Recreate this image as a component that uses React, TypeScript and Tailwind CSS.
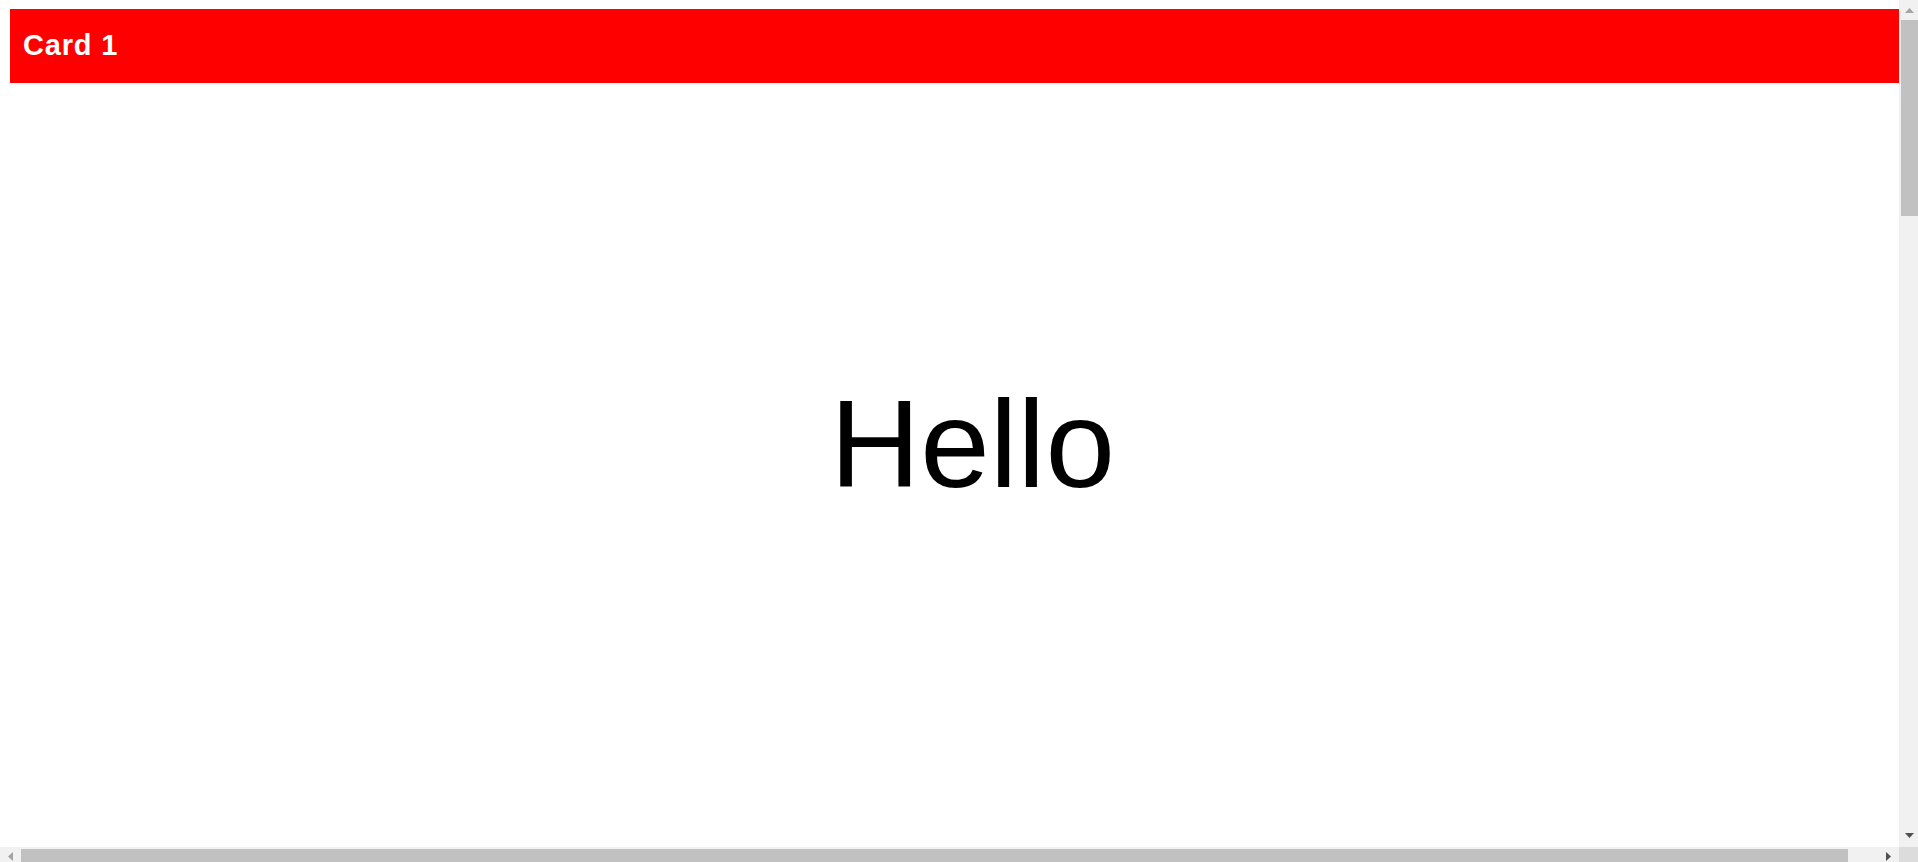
import React from 'react'

const font = { fontFamily: '"Liberation Sans", Arial, sans-serif' }

function Tri({ dir, color }: { dir: 'up' | 'down' | 'left' | 'right'; color: string }) {
  const vertical = dir === 'up' || dir === 'down'
  const w = vertical ? 9 : 5
  const h = vertical ? 5 : 9
  const pts = {
    up: '4.5,0 9,5 0,5',
    down: '0,0 9,0 4.5,5',
    left: '5,0 5,9 0,4.5',
    right: '0,0 5,4.5 0,9',
  }[dir]
  return (
    <svg width={w} height={h} viewBox={`0 0 ${w} ${h}`}>
      <polygon points={pts} fill={color} />
    </svg>
  )
}

function Card({ title, children }: { title: string; children: React.ReactNode }) {
  return (
    <div className="mt-[9px] ml-[10px] w-[1925px] shrink-0 bg-white">
      <div className="flex h-[74px] items-center bg-[#ff0000] px-[13px]">
        <h2 className="text-[29px] font-bold tracking-[0.8px] text-white">{title}</h2>
      </div>
      <div className="flex h-[720px] items-center justify-center text-[125px] leading-none text-black">
        {children}
      </div>
    </div>
  )
}

export default function App() {
  return (
    <div className="flex h-[862px] w-[1918px] flex-col overflow-hidden bg-white" style={font}>
      <div className="flex min-h-0 flex-1">
        <div className="min-w-0 flex-1 overflow-hidden">
          <Card title="Card 1">Hello</Card>
        </div>

        {/* vertical scrollbar */}
        <div className="flex w-[19px] flex-col bg-[#f1f1f1]">
          <div className="flex h-[20px] items-center justify-center pl-[2px]">
            <Tri dir="up" color="#a3a3a3" />
          </div>
          <div className="ml-[2px] h-[196px] bg-[#c1c1c1]" />
          <div className="flex-1" />
          <div className="flex h-[24px] items-center justify-center pl-[2px]">
            <Tri dir="down" color="#505050" />
          </div>
        </div>
      </div>

      {/* horizontal scrollbar */}
      <div className="flex h-[15px]">
        <div className="flex flex-1 bg-[#f1f1f1]">
          <div className="flex w-[21px] items-center justify-center pt-[4px]">
            <Tri dir="left" color="#a3a3a3" />
          </div>
          <div className="mt-[2px] h-[13px] w-[1827px] bg-[#c1c1c1]" />
          <div className="flex-1" />
          <div className="flex w-[21px] items-center justify-center pt-[4px]">
            <Tri dir="right" color="#505050" />
          </div>
        </div>
        <div className="w-[19px] bg-[#dcdcdc]" />
      </div>
    </div>
  )
}
